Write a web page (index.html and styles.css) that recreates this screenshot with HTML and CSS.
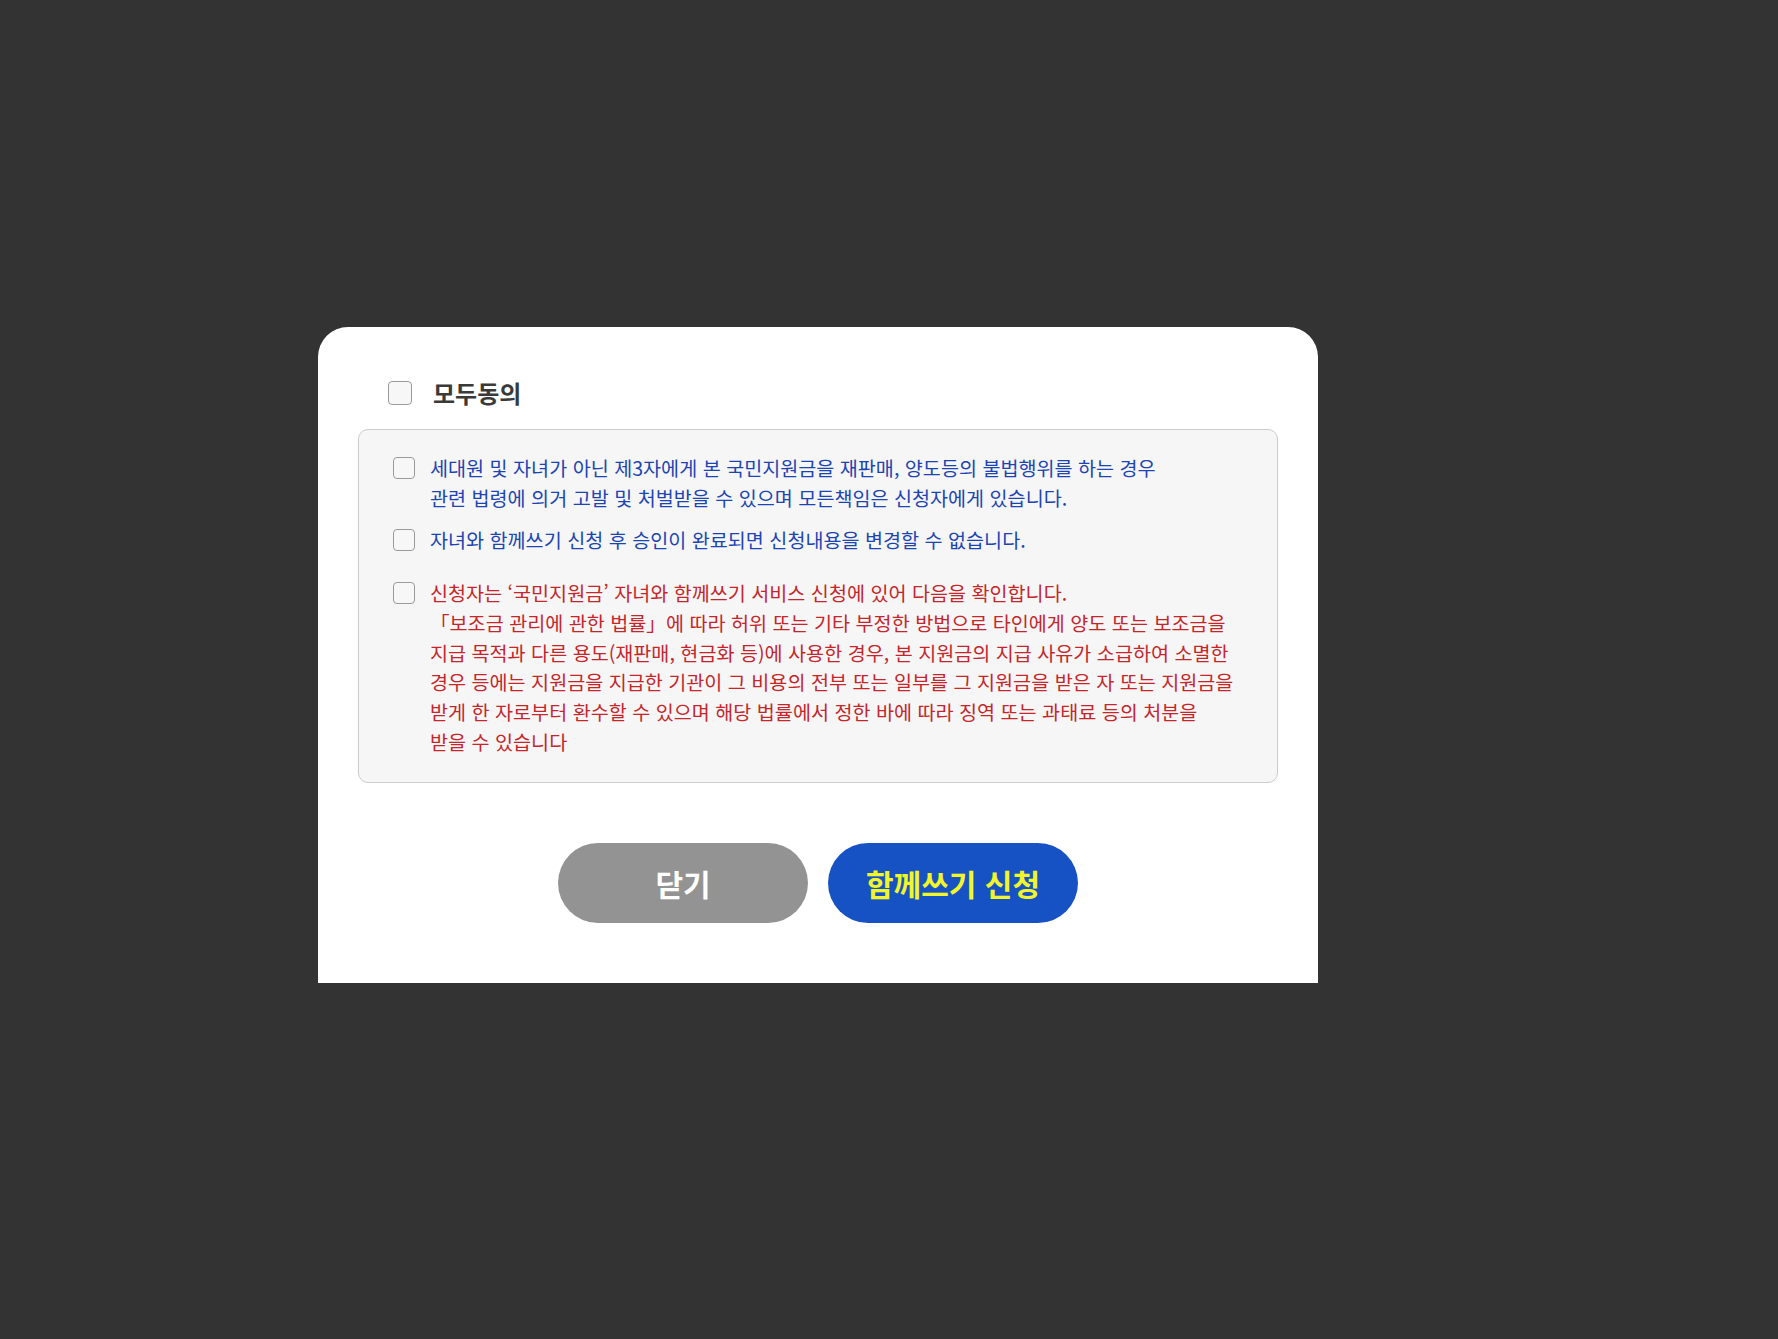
FILE: index.html
```html
<!DOCTYPE html>
<html lang="ko">
<head>
<meta charset="utf-8">
<title>함께쓰기 신청</title>
<link rel="stylesheet" href="styles.css">
</head>
<body>
<div class="page">
  <div class="modal">
    <label class="all-row">
      <input type="checkbox" class="chk chk-lg">
      <span class="all-label">모두동의</span>
    </label>
    <div class="terms">
      <label class="item blue">
        <input type="checkbox" class="chk">
        <span class="item-text">세대원 및 자녀가 아닌 제3자에게 본 국민지원금을 재판매, 양도등의 불법행위를 하는 경우<br>관련 법령에 의거 고발 및 처벌받을 수 있으며 모든책임은 신청자에게 있습니다.</span>
      </label>
      <label class="item blue">
        <input type="checkbox" class="chk">
        <span class="item-text">자녀와 함께쓰기 신청 후 승인이 완료되면 신청내용을 변경할 수 없습니다.</span>
      </label>
      <label class="item red warn">
        <input type="checkbox" class="chk">
        <span class="item-text">신청자는 ‘국민지원금’ 자녀와 함께쓰기 서비스 신청에 있어 다음을 확인합니다.<br>「보조금 관리에 관한 법률」에 따라 허위 또는 기타 부정한 방법으로 타인에게 양도 또는 보조금을<br>지급 목적과 다른 용도(재판매, 현금화 등)에 사용한 경우, 본 지원금의 지급 사유가 소급하여 소멸한<br>경우 등에는 지원금을 지급한 기관이 그 비용의 전부 또는 일부를 그 지원금을 받은 자 또는 지원금을<br>받게 한 자로부터 환수할 수 있으며 해당 법률에서 정한 바에 따라 징역 또는 과태료 등의 처분을<br>받을 수 있습니다</span>
      </label>
    </div>
    <div class="buttons">
      <button type="button" class="btn btn-close">닫기</button>
      <button type="button" class="btn btn-apply">함께쓰기 신청</button>
    </div>
  </div>
</div>
</body>
</html>
```

FILE: styles.css
```css
html, body {
  margin: 0;
  padding: 0;
  background: #333333;
}
body {
  font-family: "Noto Sans CJK KR", "Noto Sans", sans-serif;
}
.page {
  min-height: 1339px;
  box-sizing: border-box;
  padding: 327px 0 0 318px;
}
.modal {
  width: 1000px;
  box-sizing: border-box;
  background: #ffffff;
  border-radius: 30px 30px 0 0;
  padding: 50px 40px 60px;
}
.all-row {
  display: flex;
  align-items: center;
  gap: 21px;
  height: 32px;
  padding-left: 30px;
}
.all-label {
  font-size: 24px;
  font-weight: 700;
  color: #3a3a3a;
  line-height: 32px;
}
.chk {
  -webkit-appearance: none;
  appearance: none;
  margin: 0;
  flex: none;
  width: 22px;
  height: 22px;
  box-sizing: border-box;
  border: 1px solid #9a9a9a;
  border-radius: 4px;
  background: #f7f7f7;
}
.chk-lg {
  width: 24px;
  height: 24px;
}
.terms {
  margin-top: 20px;
  border: 1px solid #cccccc;
  border-radius: 10px;
  background: #f6f6f6;
  padding: 23px 40px 25px 34px;
}
.item {
  display: flex;
  align-items: flex-start;
  gap: 15px;
  font-size: 19.6px;
  line-height: 29.9px;
}
.item .chk {
  margin-top: 4px;
}
.item + .item {
  margin-top: 12px;
}
.item.warn {
  margin-top: 23px;
}
.blue {
  color: #1c45b3;
}
.red {
  color: #c4262c;
}
.buttons {
  margin-top: 60px;
  display: flex;
  justify-content: center;
  gap: 20px;
}
.btn {
  width: 250px;
  height: 80px;
  border: none;
  border-radius: 40px;
  font-family: "Noto Sans CJK KR", "Noto Sans", sans-serif;
  font-size: 30px;
  font-weight: 700;
  padding: 0;
}
.btn-close {
  background: #939393;
  color: #ffffff;
}
.btn-apply {
  background: #1652c4;
  color: #f2f52a;
}
```
